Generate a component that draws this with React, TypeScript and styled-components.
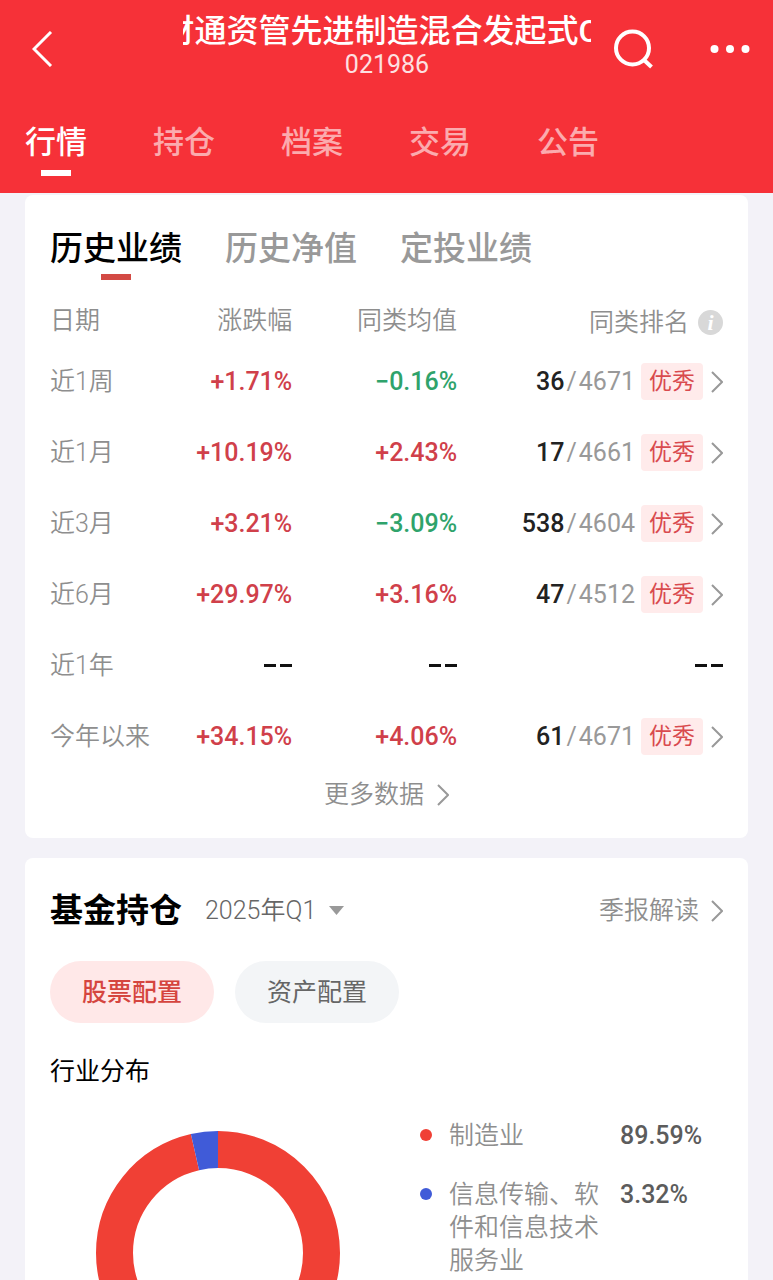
import React, { useState } from "react";
import styled, { createGlobalStyle } from "styled-components";

const GlobalStyle = createGlobalStyle`
  * { box-sizing: border-box; }
  body {
    margin: 0;
    background: #f3f2f8;
    font-family: Roboto, "Noto Sans CJK SC", sans-serif;
    font-size: 25px;
    line-height: 36px;
    color: #000;
  }
  button, select {
    font: inherit;
    color: inherit;
    background: none;
    border: 0;
    padding: 0;
    margin: 0;
    cursor: pointer;
  }
  a { color: inherit; text-decoration: none; }
`;

const Screen = styled.div`
  display: flex;
  flex-direction: column;
  height: 100vh;
`;

const Header = styled.header`
  flex: none;
  background: #f63138;
  color: #fff;
`;

const TopBar = styled.div`
  display: flex;
  align-items: center;
  height: 98px;
  padding: 0 23px 0 32px;
`;

const IconButton = styled.button`
  display: flex;
  flex: none;
`;

const Actions = styled.div`
  display: flex;
  align-items: center;
  gap: 56px;
`;

const FundTitle = styled.div`
  flex: 1;
  min-width: 0;
  margin: 0 23px 0 130px;
  padding-bottom: 8px;
  text-align: center;
`;

const Marquee = styled.h1`
  display: flex;
  justify-content: center;
  overflow: hidden;
  margin: 0;
  font-size: 32px;
  font-weight: 500;
  line-height: 40px;
  white-space: nowrap;

  span {
    flex: none;
    padding-right: 12px;
  }
`;

const FundCode = styled.div`
  line-height: 28px;
  opacity: 0.85;
`;

const Nav = styled.nav`
  display: flex;
  gap: 66px;
  padding: 24px 25px 17px;
`;

const NavLink = styled.a<{ $active: boolean }>`
  display: flex;
  flex-direction: column;
  align-items: center;
  gap: 6px;
  font-size: 31px;
  font-weight: 500;
  line-height: 42px;
  color: ${(p) => (p.$active ? "#fff" : "rgba(255, 255, 255, 0.6)")};

  &::after {
    content: "";
    width: 30px;
    height: 6px;
    background: ${(p) => (p.$active ? "#fff" : "transparent")};
  }
`;

const Content = styled.main`
  flex: 1;
  min-height: 0;
  overflow-y: auto;
  scrollbar-width: none;
  display: flex;
  flex-direction: column;
  gap: 20px;
  padding: 2px 25px 20px;
`;

const Card = styled.section`
  flex: none;
  padding: 32px 25px 21px;
  border-radius: 8px;
  background: #fff;
`;

const HoldingCard = styled(Card)`
  padding-top: 22px;
`;

const CardTabs = styled.div`
  display: flex;
  gap: 43px;
  margin-bottom: 16px;
`;

const CardTab = styled.button<{ $active: boolean }>`
  display: flex;
  flex-direction: column;
  align-items: center;
  gap: 3px;
  font-size: 33px;
  font-weight: 500;
  line-height: 44px;
  color: ${(p) => (p.$active ? "#000" : "#999")};

  &::after {
    content: "";
    width: 30px;
    height: 6px;
    background: ${(p) => (p.$active ? "#d34a44" : "transparent")};
  }
`;

const Table = styled.table`
  width: 100%;
  table-layout: fixed;
  border-collapse: collapse;
  text-align: right;

  th, td { padding: 0; }
  th { font-weight: 350; color: #8e8e8e; }
  th:first-child { text-align: left; }
  thead th { height: 50px; }
  tbody tr { height: 71px; }
`;

const Col = styled.col<{ $width: string }>`
  width: ${(p) => p.$width};
`;

const Figure = styled.td<{ $tone: "up" | "down" | "none" }>`
  font-weight: 500;
  color: ${(p) => ({ up: "#d0404a", down: "#2fa36b", none: "#000" })[p.$tone]};
`;

const RankLine = styled.div`
  display: flex;
  align-items: center;
  justify-content: flex-end;
  gap: 6px;
`;

const RankLink = styled.a`
  display: flex;
  align-items: center;
  gap: 8px;
`;

const RankNumbers = styled.span`
  display: flex;
  gap: 2px;
  color: #999;

  b { font-weight: 500; color: #222; }
`;

const Tag = styled.span`
  padding: 0 8px;
  border-radius: 4px;
  background: #ffebeb;
  color: #d94a4e;
  font-size: 23px;
  line-height: 37px;
`;

const RankHeading = styled.div`
  display: flex;
  align-items: center;
  justify-content: flex-end;
  gap: 9px;
  padding-top: 3px;
`;

const InfoButton = styled.button`
  width: 25px;
  height: 25px;
  border-radius: 50%;
  background: #d8d8d8;
  color: #fff;
  font: italic bold 22px/24px "Liberation Serif", serif;
`;

const MoreLink = styled.a`
  display: flex;
  align-items: center;
  justify-content: center;
  gap: 13px;
  height: 45px;
  font-weight: 350;
  color: #8e8e8e;
`;

const HoldingHead = styled.div`
  display: flex;
  align-items: center;
  height: 62px;
`;

const HoldingTitle = styled.h2`
  margin: 0 23px 0 0;
  font-size: 33px;
  font-weight: 700;
  line-height: 44px;
`;

const QuarterPicker = styled.label`
  display: flex;
  align-items: center;
  gap: 12px;
  font-weight: 350;
  color: #666;

  select {
    appearance: none;
    line-height: 36px;
  }
`;

const ReportLink = styled.a`
  display: flex;
  align-items: center;
  gap: 12px;
  margin-left: auto;
  font-weight: 350;
  color: #8e8e8e;
`;

const Chips = styled.div`
  display: flex;
  gap: 21px;
  margin: 19px 0 31px;
`;

const Chip = styled.button<{ $active: boolean }>`
  height: 62px;
  padding: 2px 32px 0;
  border-radius: 31px;
  background: ${(p) => (p.$active ? "#ffe8e8" : "#f3f5f7")};
  color: ${(p) => (p.$active ? "#d5453f" : "#666")};
  font-weight: ${(p) => (p.$active ? 500 : 400)};
`;

const SubTitle = styled.h3`
  margin: 0 0 29px;
  font-size: 25px;
  font-weight: 400;
  line-height: 36px;
`;

const Distribution = styled.div`
  display: flex;
  align-items: flex-start;
  gap: 80px;
  padding-left: 46px;
`;

const DonutBox = styled.div`
  flex: none;
  padding: 12px 0;

  svg { display: block; }
`;

const Legend = styled.ul`
  display: flex;
  flex-direction: column;
  gap: 26px;
  margin: 0;
  padding: 0;
  list-style: none;
  line-height: 33px;
`;

const LegendItem = styled.li`
  display: flex;
  align-items: flex-start;
`;

const Dot = styled.span<{ $color: string }>`
  flex: none;
  width: 12px;
  height: 12px;
  margin: 10px 17px 0 0;
  border-radius: 50%;
  background: ${(p) => p.$color};
`;

const LegendName = styled.span`
  width: 150px;
  margin-right: 21px;
  font-weight: 350;
  color: #8e8e8e;
`;

const LegendValue = styled.span`
  font-weight: 500;
  color: #5c5c5c;
`;

const Chevron = () => (
  <svg width="12" height="22" viewBox="0 0 12 22" fill="none" stroke="#999" strokeWidth="2" aria-hidden="true">
    <path d="M1 1l10 10L1 21" />
  </svg>
);

const sectors = [
  { name: "制造业", value: 89.59, color: "#f04035" },
  { name: "信息传输、软件和信息技术服务业", value: 3.32, color: "#405bd8" },
];

const Donut = () => {
  const total = sectors.reduce((sum, s) => sum + s.value, 0);
  let start = 0;
  return (
    <svg width="244" height="244" viewBox="0 0 244 244" role="img" aria-label="行业分布">
      <g transform="rotate(-90 122 122)" fill="none" strokeWidth="37">
        {sectors.map((s) => {
          const share = (s.value / total) * 100;
          const offset = -start;
          start += share;
          return (
            <circle
              key={s.name}
              cx="122"
              cy="122"
              r="103.5"
              pathLength={100}
              stroke={s.color}
              strokeDasharray={`${share} ${100 - share}`}
              strokeDashoffset={offset}
            />
          );
        })}
      </g>
    </svg>
  );
};

type Row = { period: string; change: string; average: string; rank?: [number, number] };

const rows: Row[] = [
  { period: "近1周", change: "+1.71%", average: "−0.16%", rank: [36, 4671] },
  { period: "近1月", change: "+10.19%", average: "+2.43%", rank: [17, 4661] },
  { period: "近3月", change: "+3.21%", average: "−3.09%", rank: [538, 4604] },
  { period: "近6月", change: "+29.97%", average: "+3.16%", rank: [47, 4512] },
  { period: "近1年", change: "--", average: "--" },
  { period: "今年以来", change: "+34.15%", average: "+4.06%", rank: [61, 4671] },
];

const Dashes = styled.span`
  display: flex;
  justify-content: flex-end;
  gap: 4px;

  i {
    width: 12px;
    height: 3px;
    background: #111;
  }
`;

const NoData = () => (
  <Dashes role="img" aria-label="--">
    <i />
    <i />
  </Dashes>
);

const tone = (v: string) => (v.startsWith("+") ? "up" : v.startsWith("−") ? "down" : "none");

const navItems = ["行情", "持仓", "档案", "交易", "公告"];
const cardTabs = ["历史业绩", "历史净值", "定投业绩"];
const chips = ["股票配置", "资产配置"];

export default function App() {
  const [nav, setNav] = useState(0);
  const [tab, setTab] = useState(0);
  const [chip, setChip] = useState(0);

  return (
    <Screen>
      <GlobalStyle />
      <Header>
        <TopBar>
          <IconButton aria-label="返回">
            <svg width="21" height="36" viewBox="0 0 21 36" fill="none" stroke="#fff" strokeWidth="3">
              <path d="M19 1L2 18l17 17" />
            </svg>
          </IconButton>
          <FundTitle>
            <Marquee>
              <span>财通资管先进制造混合发起式C</span>
            </Marquee>
            <FundCode>021986</FundCode>
          </FundTitle>
          <Actions>
            <IconButton aria-label="搜索">
              <svg width="40" height="40" viewBox="0 0 40 40" fill="none" stroke="#fff" strokeWidth="4">
                <circle cx="18.500" cy="19" r="16.500" />
                <path d="M29.500 30.500l8 7.500" />
              </svg>
            </IconButton>
            <IconButton aria-label="更多">
              <svg width="40" height="10" viewBox="0 0 40 10" fill="#fff">
                <circle cx="4.500" cy="5" r="4" />
                <circle cx="20" cy="5" r="4" />
                <circle cx="35.500" cy="5" r="4" />
              </svg>
            </IconButton>
          </Actions>
        </TopBar>
        <Nav>
          {navItems.map((label, i) => (
            <NavLink key={label} href="#" $active={i === nav} onClick={() => setNav(i)}>
              {label}
            </NavLink>
          ))}
        </Nav>
      </Header>

      <Content>
        <Card>
          <CardTabs>
            {cardTabs.map((label, i) => (
              <CardTab key={label} $active={i === tab} onClick={() => setTab(i)}>
                {label}
              </CardTab>
            ))}
          </CardTabs>
          <Table>
            <colgroup>
              <Col $width="18%" />
              <Col $width="18%" />
              <Col $width="24.5%" />
              <Col $width="39.5%" />
            </colgroup>
            <thead>
              <tr>
                <th scope="col">日期</th>
                <th scope="col">涨跌幅</th>
                <th scope="col">同类均值</th>
                <th scope="col">
                  <RankHeading>
                    同类排名
                    <InfoButton aria-label="排名说明">i</InfoButton>
                  </RankHeading>
                </th>
              </tr>
            </thead>
            <tbody>
              {rows.map((r) => (
                <tr key={r.period}>
                  <th scope="row">{r.period}</th>
                  <Figure $tone={tone(r.change)}>{r.change === "--" ? <NoData /> : r.change}</Figure>
                  <Figure $tone={tone(r.average)}>{r.average === "--" ? <NoData /> : r.average}</Figure>
                  <td>
                    {r.rank ? (
                      <RankLine>
                        <RankNumbers>
                          <b>{r.rank[0]}</b>
                          <span>/</span>
                          <span>{r.rank[1]}</span>
                        </RankNumbers>
                        <RankLink href="#" aria-label={`${r.period}排名`}>
                          <Tag>优秀</Tag>
                          <Chevron />
                        </RankLink>
                      </RankLine>
                    ) : (
                      <NoData />
                    )}
                  </td>
                </tr>
              ))}
            </tbody>
          </Table>
          <MoreLink href="#">
            更多数据
            <Chevron />
          </MoreLink>
        </Card>

        <HoldingCard>
          <HoldingHead>
            <HoldingTitle>基金持仓</HoldingTitle>
            <QuarterPicker>
              <select aria-label="报告期" defaultValue="2025年Q1">
                <option>2025年Q1</option>
              </select>
              <svg width="15" height="10" viewBox="0 0 15 10" fill="#999" aria-hidden="true">
                <path d="M0 0h15L7.500 9z" />
              </svg>
            </QuarterPicker>
            <ReportLink href="#">
              季报解读
              <Chevron />
            </ReportLink>
          </HoldingHead>
          <Chips>
            {chips.map((label, i) => (
              <Chip key={label} $active={i === chip} onClick={() => setChip(i)}>
                {label}
              </Chip>
            ))}
          </Chips>
          <SubTitle>行业分布</SubTitle>
          <Distribution>
            <DonutBox>
              <Donut />
            </DonutBox>
            <Legend>
              {sectors.map((s) => (
                <LegendItem key={s.name}>
                  <Dot $color={s.color} />
                  <LegendName>{s.name}</LegendName>
                  <LegendValue>{s.value.toFixed(2)}%</LegendValue>
                </LegendItem>
              ))}
            </Legend>
          </Distribution>
        </HoldingCard>
      </Content>
    </Screen>
  );
}
